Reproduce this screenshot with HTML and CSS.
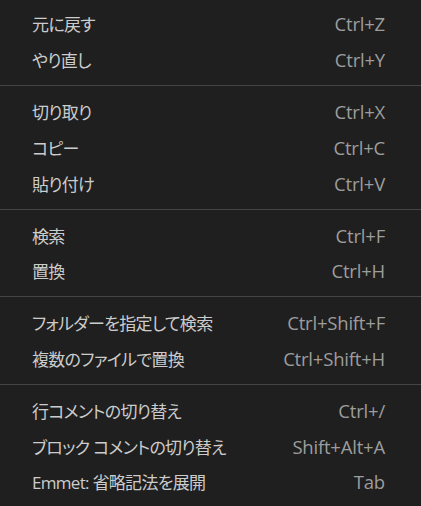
FILE: index.html
```html
<!DOCTYPE html>
<html lang="ja">
<head>
    <meta charset="UTF-8">
    <meta name="viewport" content="width=device-width, initial-scale=1.0">
    <title>編集メニュー</title>
    <link rel="stylesheet" href="styles.css">
</head>
<body>

    <!-- 編集メニュー -->
    <div class="menu">
        <div class="menu-item"><span class="label">元に戻す</span><span class="keys">Ctrl+Z</span></div>
        <div class="menu-item"><span class="label">やり直し</span><span class="keys">Ctrl+Y</span></div>
        <div class="separator"></div>

        <div class="menu-item"><span class="label">切り取り</span><span class="keys">Ctrl+X</span></div>
        <div class="menu-item"><span class="label">コピー</span><span class="keys">Ctrl+C</span></div>
        <div class="menu-item"><span class="label">貼り付け</span><span class="keys">Ctrl+V</span></div>
        <div class="separator"></div>

        <div class="menu-item"><span class="label">検索</span><span class="keys">Ctrl+F</span></div>
        <div class="menu-item"><span class="label">置換</span><span class="keys">Ctrl+H</span></div>
        <div class="separator"></div>

        <div class="menu-item"><span class="label">フォルダーを指定して検索</span><span class="keys">Ctrl+Shift+F</span></div>
        <div class="menu-item"><span class="label">複数のファイルで置換</span><span class="keys">Ctrl+Shift+H</span></div>
        <div class="separator"></div>

        <div class="menu-item"><span class="label">行コメントの切り替え</span><span class="keys">Ctrl+/</span></div>
        <div class="menu-item"><span class="label">ブロック コメントの切り替え</span><span class="keys">Shift+Alt+A</span></div>
        <div class="menu-item"><span class="label">Emmet: 省略記法を展開</span><span class="keys">Tab</span></div>
    </div>

</body>
</html>
```

FILE: styles.css
```css
/* 全体 */
body {
    margin: 0;
    padding: 0;
    background-color: #1f1f1f;
    font-family: "Open Sans", "Noto Sans CJK JP", sans-serif;
    font-size: 16px;
}

.menu {
    padding-top: 6px;
}

/* メニュー項目 */
.menu-item {
    display: flex;
    align-items: center;
    justify-content: space-between;
    height: 35.75px;
    padding: 0 36px 0 32px;
}

.menu-item .label {
    color: #cccccc;
    font-size: 17px;
    letter-spacing: -0.7px;
    font-feature-settings: "palt";
}

.menu-item .keys {
    color: #9d9d9d;
    font-size: 18.5px;
    letter-spacing: -0.2px;
}

/* 区切り線 */
.separator {
    height: 1px;
    margin: 7.6px 0;
    background-color: #454545;
}
```
